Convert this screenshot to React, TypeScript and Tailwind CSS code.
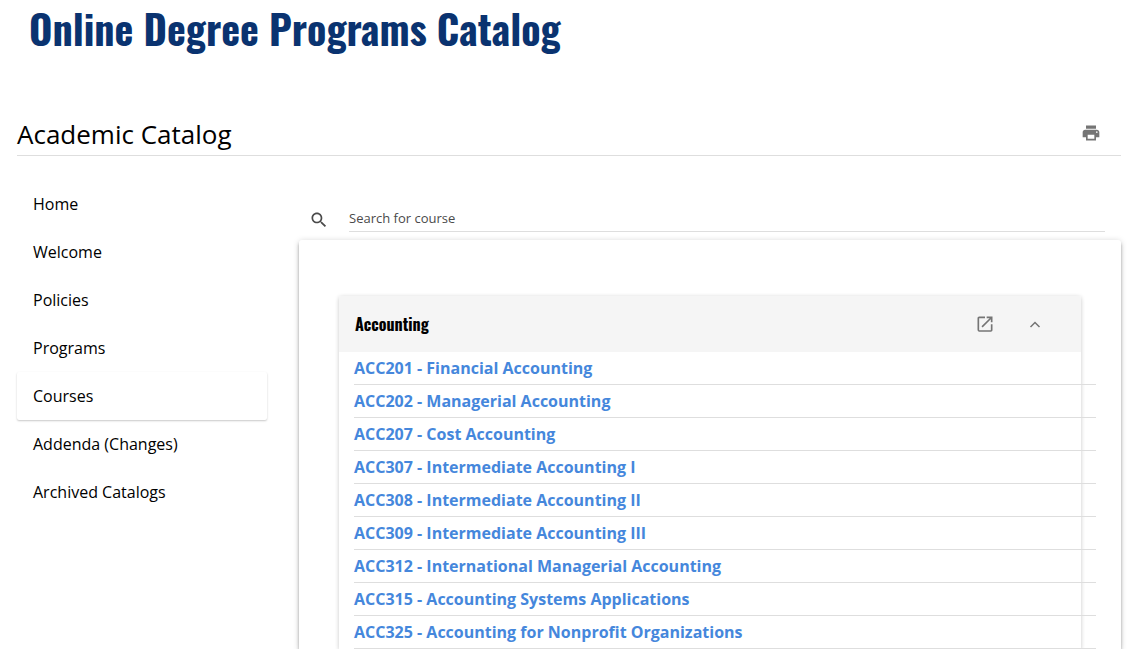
const nav = ["Home", "Welcome", "Policies", "Programs", "Courses", "Addenda (Changes)", "Archived Catalogs"];

const courses = [
  "ACC201 - Financial Accounting",
  "ACC202 - Managerial Accounting",
  "ACC207 - Cost Accounting",
  "ACC307 - Intermediate Accounting I",
  "ACC308 - Intermediate Accounting II",
  "ACC309 - Intermediate Accounting III",
  "ACC312 - International Managerial Accounting",
  "ACC315 - Accounting Systems Applications",
  "ACC325 - Accounting for Nonprofit Organizations",
];

function NavItem({ label, active }: { label: string; active: boolean }) {
  return (
    <a
      href="#"
      aria-current={active ? "page" : undefined}
      className={
        active
          ? "flex h-12 items-center rounded-xs px-4 shadow-[0_1px_2px_rgba(0,0,0,0.22)]"
          : "flex h-12 items-center px-4"
      }
    >
      {label}
    </a>
  );
}

export default function App() {
  return (
    <div className="flex min-h-screen flex-col overflow-hidden bg-white px-[17px] font-['Open_Sans','Noto_Sans',sans-serif] text-base text-black">
      <h1 className="px-3 font-[Oswald,'Liberation_Sans_Narrow',sans-serif] text-[40px] leading-[56px] font-bold text-[#0a3370]">
        Online Degree Programs Catalog
      </h1>
      <header className="mt-[58px] flex h-[42px] items-center justify-between border-b border-[#dedede] pr-5">
        <h2 className="text-[26px]">Academic Catalog</h2>
        <button type="button" aria-label="Print" className="pb-1">
          <svg viewBox="0 0 24 24" className="size-5 fill-[#757575]">
            <path d="M19 8H5c-1.66 0-3 1.34-3 3v6h4v4h12v-4h4v-6c0-1.66-1.34-3-3-3zm-3 11H8v-5h8v5zm3-7c-.55 0-1-.45-1-1s.45-1 1-1 1 .45 1 1-.45 1-1 1zm-1-9H6v4h12V3z" />
          </svg>
        </button>
      </header>
      <div className="flex flex-1 gap-8">
        <nav aria-label="Catalog" className="w-[250px] shrink-0 pt-6">
          {nav.map((n) => (
            <NavItem key={n} label={n} active={n === "Courses"} />
          ))}
        </nav>
        <main className="flex min-w-0 flex-1 flex-col pt-12">
          <div className="flex h-7 items-end pr-4 pl-[10px]">
            <label htmlFor="search" aria-label="Search" className="w-10 shrink-0 pb-[2px]">
              <svg viewBox="0 0 24 24" className="size-5 fill-[#4a4a4a]">
                <path d="M15.5 14h-.79l-.28-.27C15.41 12.59 16 11.11 16 9.5 16 5.91 13.09 3 9.5 3S3 5.91 3 9.5 5.91 16 9.5 16c1.61 0 3.09-.59 4.23-1.57l.27.28v.79l5 4.99L20.49 19l-4.99-5zm-6 0C7.01 14 5 11.99 5 9.5S7.01 5 9.5 5 14 7.01 14 9.5 11.99 14 9.5 14z" />
              </svg>
            </label>
            <input
              id="search"
              placeholder="Search for course"
              className="h-7 w-full border-b border-[#dedede] text-[13px] outline-none placeholder:text-[#4a4a4a]"
            />
          </div>
          <section className="mt-2 flex flex-1 flex-col rounded-t-[3px] px-10 pt-14 shadow-[0_3px_3px_rgba(0,0,0,0.3),0_1px_6px_rgba(0,0,0,0.18)]">
            <div className="flex-1 rounded-t-xs shadow-[0_1px_4px_rgba(0,0,0,0.22)]">
              <div className="flex h-14 items-center rounded-t-xs bg-[#f5f5f5] px-4">
                <h3 className="flex-1 font-[Oswald,'Liberation_Sans_Narrow',sans-serif] text-base font-bold">Accounting</h3>
                <button type="button" aria-label="Open in new window" className="mr-[30px]">
                  <svg viewBox="0 0 24 24" className="size-5 fill-[#757575]">
                    <path d="M19 19.500H5V5h7V3H5c-1.11 0-2 .9-2 2v14c0 1.1.89 2.200 2 2.200h14c1.1 0 2-.9 2-2v-7h-2v7zM14 3v2h3.59l-9.83 9.83 1.41 1.41L19 6.41V10h2V3h-7z" />
                  </svg>
                </button>
                <button type="button" aria-label="Collapse Accounting" aria-expanded="true" className="mr-5">
                  <svg viewBox="0 0 20 20" className="size-5 fill-none stroke-[#757575] stroke-[1.5]">
                    <path d="M5.500 13L10 8.500l4.500 4.500" />
                  </svg>
                </button>
              </div>
              <ul className="-mr-[15px] ml-[15px]">
                {courses.map((c) => (
                  <li key={c} className="h-[33px] border-b border-[#dedede]">
                    <a href="#" className="block leading-8 font-bold text-[#4587dc]">{c}</a>
                  </li>
                ))}
              </ul>
            </div>
          </section>
        </main>
      </div>
    </div>
  );
}
